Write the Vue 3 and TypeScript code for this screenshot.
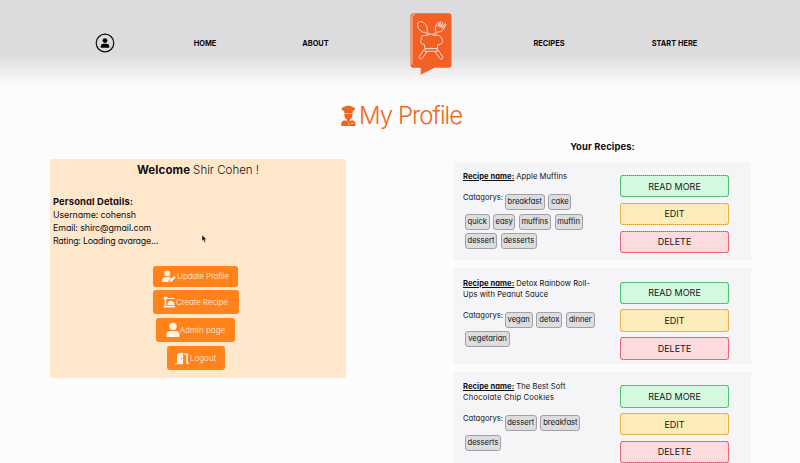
<script setup lang="ts">
interface Tag { name: string; width: number }
interface Recipe { title: string[]; tags: Tag[][]; size: string }

const recipes: Recipe[] = [
  {
    title: ['Apple Muffins'],
    size: 'first',
    tags: [
      [{ name: 'breakfast', width: 40 }, { name: 'cake', width: 23 }],
      [{ name: 'quick', width: 24.5 }, { name: 'easy', width: 22 }, { name: 'muffins', width: 32 }, { name: 'muffin', width: 28 }],
      [{ name: 'dessert', width: 32 }, { name: 'desserts', width: 36 }],
    ],
  },
  {
    title: ['Detox Rainbow Roll-', 'Ups with Peanut Sauce'],
    size: 'second',
    tags: [
      [{ name: 'vegan', width: 28 }, { name: 'detox', width: 26 }, { name: 'dinner', width: 28.5 }],
      [{ name: 'vegetarian', width: 45 }],
    ],
  },
  {
    title: ['The Best Soft', 'Chocolate Chip Cookies'],
    size: 'third',
    tags: [
      [{ name: 'dessert', width: 32 }, { name: 'breakfast', width: 40 }],
      [{ name: 'desserts', width: 36 }],
    ],
  },
]
</script>

<template>
  <div class="page">
    <header class="nav">
      <a class="account">
        <svg width="20" height="20" viewBox="0 0 20 20">
          <circle cx="10" cy="10" r="8.8" fill="none" stroke="#0b0b0d" stroke-width="1.2" />
          <circle cx="10" cy="7.6" r="2.4" />
          <path d="M5.8 14.7v-1.5q0-2.4 2.4-2.4h3.6q2.4 0 2.4 2.4v1.5z" />
        </svg>
      </a>
      <a>HOME</a>
      <a>ABOUT</a>
      <a class="logo">
        <svg width="44" height="64" viewBox="0 0 44 64">
          <path d="M4.5 1.2h35q3 0 3 3v48.5q0 3-3 3H25.5L11.2 63V55.7H4.5q-3 0-3-3V4.2q0-3 3-3z" fill="#f26024" />
          <path d="M3 52.5V5q0-2.6 2.6-2.8M11.6 56v6.3" fill="none" stroke="#f7d8cb" stroke-width=".9" />
          <g fill="none" stroke="#f8d9cd" stroke-width="1" stroke-linejoin="round">
            <path d="M18.8 23.5L16.9 20.5Q12.8 21 10.2 17.4C7.9 13.6 7.9 9.8 11.3 9.5c4.4-.2 8 5.8 6.7 9.7l2.7 3.8" />
            <path d="M24.1 23.5l2.8-4.3q-2-4 .8-6.8l2.6-2.8M28.5 20q4 .3 6-2.5l2.6-5.5M28.5 20l-2.7 3.7" />
            <path d="M28.8 15l3.5-5.8M30.5 16l4-6M32.6 16.6l3.8-5.4M28.6 12.4l6.3 3.8M29.7 11l5.6 3.2" stroke-width="1" />
            <path d="M15.8 36.5l-.3-3.8c-3.3-.1-4.6-2.5-3.5-4.8-.1-3.4 2.3-5.4 5.5-4.2 2.8-2.1 6.2-2.1 8.8 0 3.5-1.2 6.8.8 6.9 4.2 1.1 2.5-.8 4.8-4.3 4.8l-.5 3.8zM16 36.8q6-1 12.2 0v2.8q-6-1-12.2 0z" />
            <path d="M14.7 37.8L10.4 44.5c-.9 1.8 1.4 3.5 2.8 1.8L18 39.5M25.7 39.5l5.2 7c1.4 1.5 3.6.1 2.7-1.8l-4.5-6.9" />
          </g>
        </svg>
      </a>
      <a>RECIPES</a>
      <a>START HERE</a>
    </header>

    <h1 class="title">
      <svg width="17" height="22" viewBox="0 0 17 22" fill="#f0671c">
        <path d="M4 5.9C.7 5.3 1.2 1.8 4.2 2 5.8.3 10.7.3 12.4 2c3.2-.2 3.6 3.4.4 3.9l-.4 2.5H4.4z" />
        <path d="M4.4 9.1h8v1.3c0 1.8-1.1 3.3-2.5 4v1.8l-1.5.8-1.5-.8v-1.8c-1.4-.7-2.5-2.2-2.5-4z" />
        <path d="M1.2 21v-2.1c0-2.1 1.4-3.4 3.5-3.7l3.7 1.6 3.7-1.6c2.2.3 3.5 1.6 3.5 3.7V21z" />
        <path d="M8.8 17.8v.8M8.8 19.5v.8M11.2 18.4h2.4" stroke="#fff" stroke-width=".8" />
      </svg>
      <span>My Profile</span>
    </h1>

    <main class="columns">
      <section class="profile">
        <h2><b>Welcome</b><span>Shir Cohen !</span></h2>
        <div class="details">
          <h3>Personal Details:</h3>
          <p class="user">Username: cohensh</p>
          <p class="mail">Email: shirc@gmail.com</p>
          <p class="rating">Rating: Loading avarage...</p>
        </div>
        <nav class="actions">
          <button class="update">
            <svg width="15" height="13" viewBox="0 0 15 13">
              <circle cx="5.3" cy="3.4" r="2.9" />
              <path d="M.3 12v-1.8c0-2 1.4-3.2 3.3-3.2h3.6l2 .9-2.3 2.3-.4 1.8z" />
              <path d="M7.5 12l.5-2.3 4-4 1.8 1.8-4 4z" />
            </svg><span>Update Profile</span>
          </button>
          <button class="create">
            <svg width="13" height="13" viewBox="0 0 13 13">
              <path d="M.7.8h3.8v1.1h6.9v1H3.2V10h8.8v1.6H.7V10h1V3.4h-1z" />
              <path d="M4.4 9.2C4.2 6.4 6 4.8 8 4.8s3.6 1.6 3.5 4.4z" />
            </svg><span>Create Recipe</span>
          </button>
          <button class="admin">
            <svg width="14" height="16" viewBox="0 0 14 16">
              <circle cx="7" cy="4.4" r="3.7" />
              <path d="M.5 15v-2q0-4 4-4h5q4 0 4 4v2z" />
            </svg><span>Admin page</span>
          </button>
          <button class="logout">
            <svg width="15" height="13" viewBox="0 0 15 13">
              <path fill-rule="evenodd" d="M2 1.8L8.1.5v11.8H.4V11H2zM6 6.1v1.4h.9V6.1z" />
              <path d="M9 2.1h3v9h2.2" fill="none" stroke="#fff4e8" stroke-width="1.4" />
            </svg><span>Logout</span>
          </button>
        </nav>
      </section>

      <section class="recipes">
        <h2>Your Recipes:</h2>
        <article v-for="recipe in recipes" :key="recipe.title[0]" :class="['recipe', recipe.size]">
          <div class="info">
            <p class="name"><b>Recipe name:</b><span v-for="line in recipe.title" :key="line">{{ line }}</span></p>
            <div class="tags">
              <div v-for="(row, r) in recipe.tags" :key="r" class="row">
                <span v-if="r === 0" class="label">Catagorys:</span>
                <span v-for="tag in row" :key="tag.name" class="tag" :style="{ width: tag.width + 'px' }">{{ tag.name }}</span>
              </div>
            </div>
          </div>
          <div class="controls">
            <button class="read">READ MORE</button>
            <button class="edit">EDIT</button>
            <button class="delete">DELETE</button>
          </div>
        </article>
      </section>
    </main>

    <svg class="cursor" width="7" height="10" viewBox="0 0 7 10">
      <path d="M1 .8v6.4l1.5-1.3 1 2.5 1.3-.5-1-2.4h1.9z" fill="#111" stroke="#fff" stroke-width=".5" />
    </svg>
  </div>
</template>

<style>
body { background: #fcfcfc; overflow: hidden; }
</style>

<style scoped>
* { box-sizing: border-box; margin: 0; }
.page {
  position: relative;
  width: 800px;
  height: 463px;
  overflow: hidden;
  background: #fcfcfc;
  color: #101012;
  font-family: Inter, "Liberation Sans", sans-serif;
  font-feature-settings: "cv11";
}
.nav {
  height: 86px;
  padding-left: 50px;
  display: grid;
  grid-template-columns: 110px 90px 131px 99px 138px 113px;
  align-items: center;
  justify-items: center;
  background: linear-gradient(#dcdcdf 0, #dcdcdf 54px, #fcfcfc 86px);
  font-size: 7.4px;
  font-weight: 700;
  color: #09090b;
}
.nav svg { display: block; }
.logo { margin-top: 2px; }
.title {
  display: flex;
  height: 49px;
  padding: 15px 0 0 340px;
  color: #f0671c;
  font-size: 24px;
  font-weight: 300;
  line-height: 29px;
}
.title svg { margin-top: 4px; }
.title span { margin-left: 2px; white-space: nowrap; letter-spacing: -.95px; }
.columns { display: flex; padding-left: 50px; }
.profile {
  width: 296px;
  height: 219px;
  margin-top: 23.5px;
  padding: 0 3px;
  border-radius: 3px;
  background: #ffe7cc;
}
.profile h2 {
  height: 37.5px;
  padding-top: 4px;
  display: flex;
  justify-content: center;
  gap: 3px;
  font-size: 11.5px;
  line-height: 15px;
  font-weight: 400;
}
.profile h2 b { letter-spacing: .1px; }
.profile h2 span { font-weight: 300; }
.details { height: 70px; font-size: 8.9px; }
.details h3 { font-size: 9.4px; line-height: 12px; letter-spacing: .12px; }
.details p { line-height: 13px; }
.user, .mail { letter-spacing: -.1px; }
.rating { letter-spacing: -.23px; }
.actions { display: flex; flex-direction: column; align-items: center; gap: 3.6px; margin-left: -4px; margin-right: 1px; }
.actions button {
  height: 24.3px;
  display: flex;
  align-items: center;
  justify-content: center;
  border: 0;
  border-radius: 3px;
  padding: 0;
  background: #ff821b;
  color: #fff0e0;
  font: 300 8.1px Inter, sans-serif;
  font-feature-settings: "cv11";
}
.actions svg { fill: #fff4e8; flex: none; }
.actions .update { width: 85.5px; height: 20.5px; }
.actions .update span { letter-spacing: -.14px; }
.actions .create { width: 86px; }
.actions .create span { letter-spacing: -.1px; }
.actions .admin { width: 79px; }
.actions .logout { width: 58px; }
.recipes { width: 297px; margin-left: 108px; }
.recipes h2 { height: 27px; padding-top: 5px; text-align: center; font-size: 9.4px; line-height: 13px; letter-spacing: .13px; }
.recipe {
  display: flex;
  height: 98px;
  margin-bottom: 8px;
  padding-left: 9px;
  background: #f5f5f8;
}
.recipe.second { height: 95.5px; }
.info { width: 157px; padding-top: 9px; }
.second .info, .third .info { padding-top: 9.8px; }
.name { font-size: 7.6px; line-height: 11px; letter-spacing: .06px; }
.name b { text-decoration: underline; margin-right: 2px; }
.name span { white-space: nowrap; }
.name span + span { display: block; }
.third .name span + span { letter-spacing: .2px; }
.tags { display: flex; flex-direction: column; gap: 3.5px; padding: 12px 0 0 2px; }
.row { display: flex; gap: 3.7px; height: 16px; }
.label { width: 39px; margin: 0 -1px 0 -2px; font-size: 7.6px; line-height: 8px; }
.tag {
  height: 16px;
  border: 1px solid #a2a2a6;
  border-radius: 3px;
  background: #dddde0;
  font-size: 7.6px;
  line-height: 14px;
  white-space: nowrap;
  display: flex;
  justify-content: center;
}
.controls { display: flex; flex-direction: column; gap: 5.4px; padding-top: 13px; }
.second .controls, .third .controls { padding-top: 13.7px; }
.controls button {
  width: 109px;
  height: 22.4px;
  padding: 0;
  border: 1px dotted;
  border-radius: 3px;
  outline: 1px solid;
  outline-offset: -1px;
  font: 400 9px Inter, sans-serif;
  color: #161618;
}
.controls .read { background: #d3f9df; border-color: #22b653; outline-color: #22b6538c; }
.controls .edit { background: #fcecba; border-color: #f29a20; outline-color: #f29a208c; }
.controls .delete { background: #fcdbdf; border-color: #ee4055; outline-color: #ee40558c; }
.cursor { position: absolute; left: 201px; top: 234px; }
</style>
